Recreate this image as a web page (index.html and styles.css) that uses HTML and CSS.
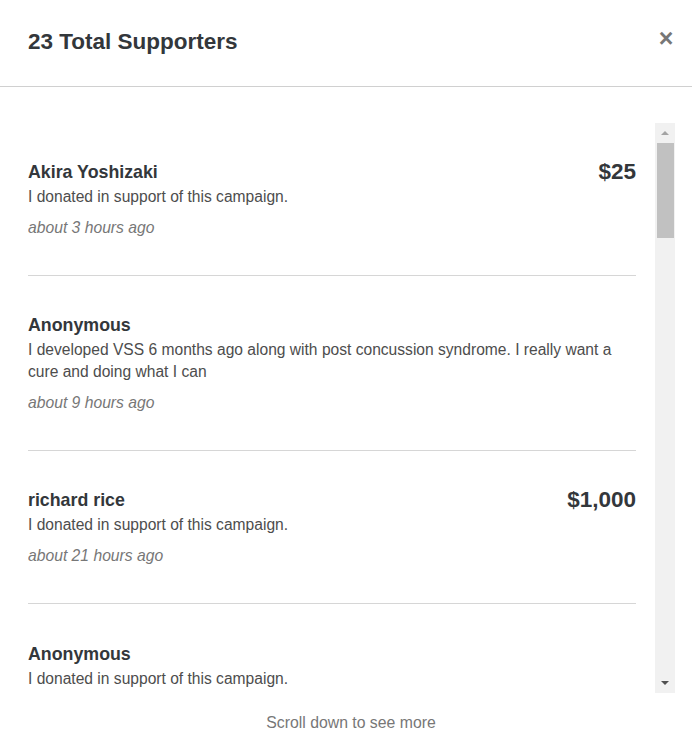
FILE: index.html
```html
<!DOCTYPE html>
<html lang="en">
<head>
<meta charset="utf-8">
<title>Supporters</title>
<link rel="stylesheet" href="styles.css">
</head>
<body>
<div class="modal">
  <header class="modal-header">
    <h1 class="title">23 Total Supporters</h1>
    <button class="close" aria-label="Close">&times;</button>
  </header>
  <div class="modal-body">
    <div class="list">
      <div class="item">
        <div class="item-top">
          <div class="name">Akira Yoshizaki</div>
          <div class="amount">$25</div>
        </div>
        <p class="msg">I donated in support of this campaign.</p>
        <p class="time">about 3 hours ago</p>
      </div>
      <div class="item">
        <div class="item-top">
          <div class="name">Anonymous</div>
        </div>
        <p class="msg">I developed VSS 6 months ago along with post concussion syndrome. I really want a cure and doing what I can</p>
        <p class="time">about 9 hours ago</p>
      </div>
      <div class="item">
        <div class="item-top">
          <div class="name">richard rice</div>
          <div class="amount">$1,000</div>
        </div>
        <p class="msg">I donated in support of this campaign.</p>
        <p class="time">about 21 hours ago</p>
      </div>
      <div class="item item-last">
        <div class="item-top">
          <div class="name">Anonymous</div>
        </div>
        <p class="msg">I donated in support of this campaign.</p>
      </div>
    </div>
    <div class="scrollbar">
      <div class="arrow up"></div>
      <div class="thumb"></div>
      <div class="track-rest"></div>
      <div class="arrow down"></div>
    </div>
  </div>
  <p class="more">Scroll down to see more</p>
</div>
</body>
</html>
```
FILE: styles.css
```css
* { box-sizing: border-box; }
html, body {
  margin: 0;
  padding: 0;
  background: #fff;
}
body {
  font-family: "Liberation Sans", Arial, sans-serif;
  color: #333;
}
.modal {
  width: 692px;
  height: 739px;
  overflow: hidden;
}
.modal-header {
  height: 87px;
  border-bottom: 1px solid #d0d0d0;
  display: flex;
  align-items: flex-start;
  justify-content: space-between;
  padding: 0 18px 0 28px;
}
.title {
  margin: 29px 0 0;
  font-size: 22.5px;
  line-height: 26px;
  font-weight: bold;
  color: #33373b;
}
.close {
  margin-top: 24px;
  border: 0;
  background: none;
  padding: 0;
  width: 16px;
  font-family: "Liberation Sans", Arial, sans-serif;
  font-size: 25px;
  line-height: 28px;
  font-weight: bold;
  color: #777;
  text-align: center;
  cursor: pointer;
}
.modal-body {
  display: flex;
  padding: 36px 17px 0 28px;
  height: 606px;
}
.list {
  flex: 1;
  height: 570px;
  overflow: hidden;
}
.item {
  padding: 37px 0 36px;
  border-bottom: 1px solid #d6d6d6;
}
.item-last {
  padding-top: 38px;
}
.item-top {
  display: flex;
  justify-content: space-between;
  align-items: center;
  margin-bottom: 2px;
}
.name {
  font-size: 17.8px;
  line-height: 24px;
  font-weight: bold;
  color: #33373b;
}
.amount {
  font-size: 22.5px;
  line-height: 24px;
  font-weight: bold;
  color: #33373b;
}
.msg {
  margin: 0;
  font-size: 15.6px;
  line-height: 22px;
  color: #4d4d4d;
}
.time {
  margin: 9px 0 0;
  font-size: 15.7px;
  line-height: 22px;
  font-style: italic;
  color: #777;
}
.scrollbar {
  width: 20px;
  height: 570px;
  margin-left: 19px;
  background: #f1f1f1;
  display: flex;
  flex-direction: column;
  align-items: center;
}
.arrow {
  height: 20px;
  width: 17px;
  display: flex;
  align-items: center;
  justify-content: center;
}
.arrow::before {
  content: "";
  width: 0;
  height: 0;
  border-left: 4px solid transparent;
  border-right: 4px solid transparent;
}
.arrow.up::before {
  border-bottom: 4px solid #a3a3a3;
}
.arrow.down::before {
  border-top: 4px solid #505050;
}
.thumb {
  width: 17px;
  height: 95px;
  background: #c1c1c1;
}
.track-rest {
  flex: 1;
}
.more {
  margin: 19px 0 0;
  padding-left: 10px;
  text-align: center;
  font-size: 15.8px;
  line-height: 22px;
  color: #777;
}
```
